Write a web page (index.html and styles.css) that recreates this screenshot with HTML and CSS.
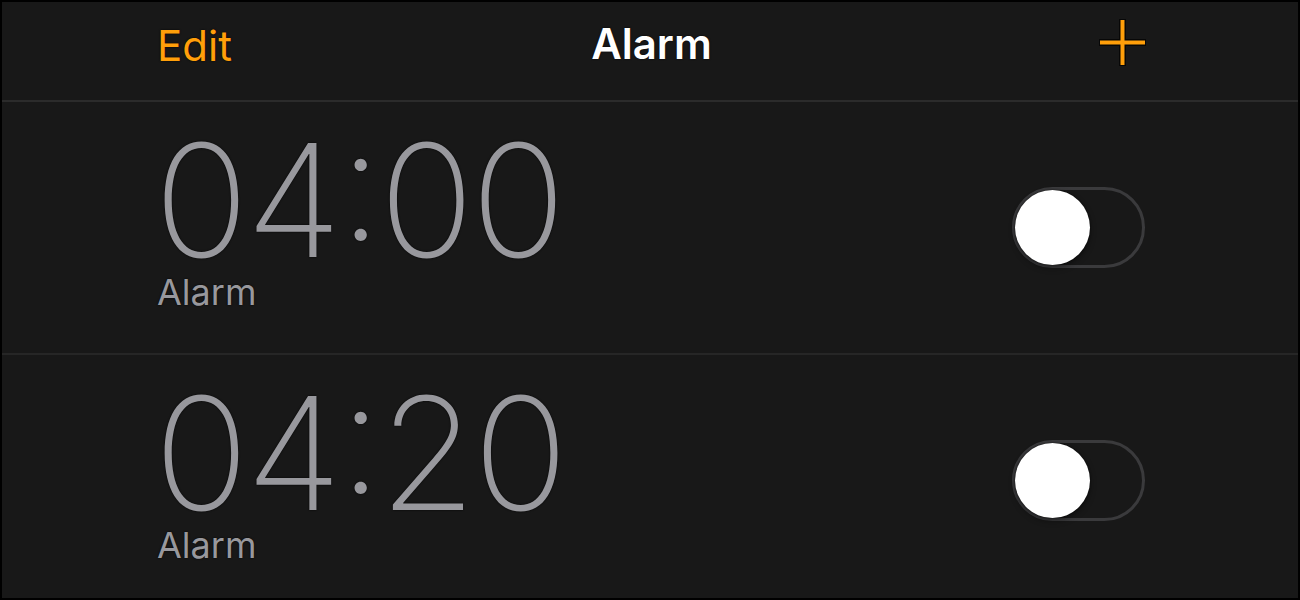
FILE: index.html
```html
<!DOCTYPE html>
<html lang="en">
<head>
<meta charset="utf-8">
<title>Alarm</title>
<link rel="stylesheet" href="styles.css">
</head>
<body>
<div class="screen">
  <header class="nav">
    <span class="nav-edit">Edit</span>
    <span class="nav-title">Alarm</span>
    <span class="nav-add" aria-label="Add">
      <svg width="47" height="47" viewBox="0 0 47 47">
        <g stroke="#000" stroke-width="7" stroke-linecap="butt" opacity="0.7">
          <line x1="23.5" y1="0" x2="23.5" y2="47"/>
          <line x1="0" y1="23.5" x2="47" y2="23.5"/>
        </g>
        <g stroke="#ff9f0a" stroke-width="4" stroke-linecap="butt">
          <line x1="23.5" y1="1" x2="23.5" y2="46"/>
          <line x1="1" y1="23.5" x2="46" y2="23.5"/>
        </g>
      </svg>
    </span>
  </header>
  <div class="row">
    <div class="alarm-info">
      <div class="alarm-time">04:00</div>
      <div class="alarm-label">Alarm</div>
    </div>
    <div class="toggle"><div class="knob"></div></div>
  </div>
  <div class="row">
    <div class="alarm-info">
      <div class="alarm-time">04:20</div>
      <div class="alarm-label">Alarm</div>
    </div>
    <div class="toggle"><div class="knob"></div></div>
  </div>
</div>
</body>
</html>
```
FILE: styles.css
```css
html, body {
  margin: 0;
  padding: 0;
  background: #000;
}
.screen {
  box-sizing: border-box;
  width: 1300px;
  height: 600px;
  border: 2px solid #000;
  background: #181818;
  overflow: hidden;
  font-family: Inter, "Liberation Sans", sans-serif;
}
.nav {
  box-sizing: border-box;
  height: 100px;
  border-bottom: 2px solid #2b2b2b;
  display: grid;
  grid-template-columns: 1fr auto 1fr;
  align-items: start;
  padding: 17px 152px 0 155px;
}
.nav-edit {
  justify-self: start;
  color: #ff9f0a;
  font-size: 42px;
  line-height: 44px;
  margin-top: 5px;
  text-shadow: 0 0 2px #000;
}
.nav-title {
  justify-self: center;
  color: #fff;
  font-size: 42px;
  font-weight: 600;
  line-height: 44px;
  margin-top: 3px;
  text-shadow: 0 0 2px #000;
}
.nav-add {
  justify-self: end;
  display: block;
  height: 47px;
}
.nav-add svg {
  display: block;
}
.row {
  box-sizing: border-box;
  height: 253px;
  border-bottom: 2px solid #262626;
  display: flex;
  align-items: center;
  justify-content: space-between;
  padding: 0 153px 0 155px;
}
.alarm-info {
  align-self: flex-start;
  margin-top: 28px;
  display: flex;
  flex-direction: column;
}
.alarm-time {
  color: #98989d;
  font-size: 157px;
  font-weight: 200;
  line-height: 140px;
  letter-spacing: -3px;
  margin-left: -3px;
  font-feature-settings: "case" 1;
  text-shadow: 0 0 2px #000;
}
.alarm-label {
  color: #98989d;
  font-size: 36px;
  line-height: 36px;
  margin-top: 4px;
  text-shadow: 0 0 2px #000;
}
.toggle {
  box-sizing: border-box;
  width: 133px;
  height: 81px;
  border: 3px solid #3a3a3c;
  border-radius: 41px;
  display: flex;
  align-items: center;
  flex-shrink: 0;
}
.knob {
  width: 75px;
  height: 75px;
  border-radius: 50%;
  background: #fff;
  box-shadow: 0 0 2px rgba(0,0,0,0.8), 0 3px 6px rgba(0,0,0,0.4);
}
```
